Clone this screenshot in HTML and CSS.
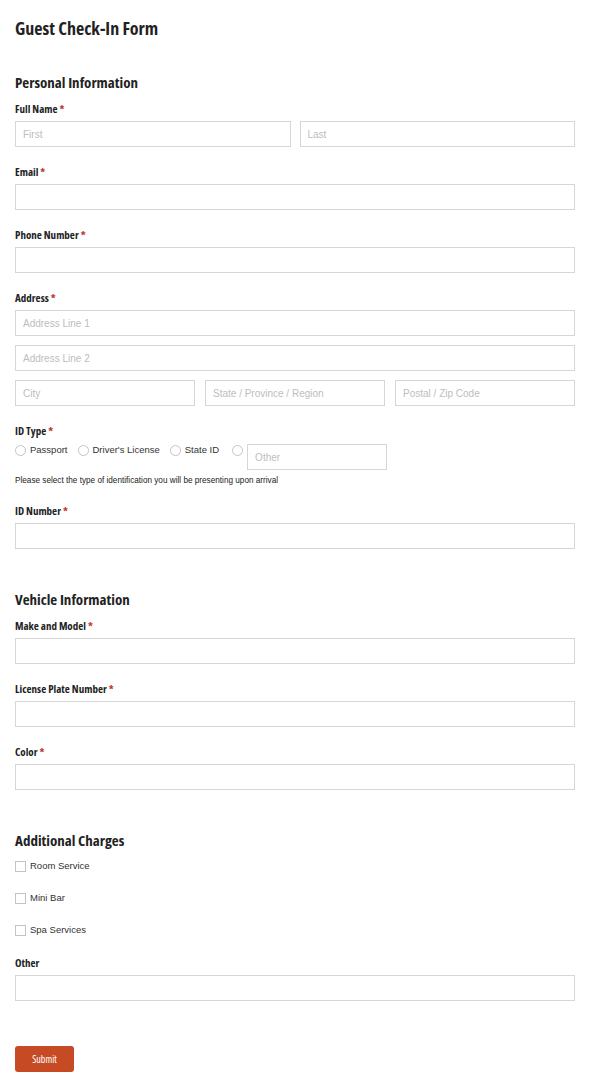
FILE: index.html
```html
<!DOCTYPE html>
<html lang="en">
<head>
    <meta charset="UTF-8">
    <meta name="viewport" content="width=device-width, initial-scale=1.0">
    <title>Guest Check-In Form</title>
    <link rel="stylesheet" href="styles.css">
</head>
<body>

    <form class="form" onsubmit="return false">
        <h1 class="form-title">Guest Check-In Form</h1>

        <section class="section">
            <h2>Personal Information</h2>

            <div class="field">
                <label>Full Name <span class="req">*</span></label>
                <div class="row row-2">
                    <input type="text" placeholder="First">
                    <input type="text" placeholder="Last">
                </div>
            </div>

            <div class="field">
                <label for="email">Email <span class="req">*</span></label>
                <input type="email" id="email">
            </div>

            <div class="field">
                <label for="phone">Phone Number <span class="req">*</span></label>
                <input type="tel" id="phone">
            </div>

            <div class="field">
                <label>Address <span class="req">*</span></label>
                <div class="stack">
                    <input type="text" placeholder="Address Line 1">
                    <input type="text" placeholder="Address Line 2">
                    <div class="row row-3">
                        <input type="text" placeholder="City">
                        <input type="text" placeholder="State / Province / Region">
                        <input type="text" placeholder="Postal / Zip Code">
                    </div>
                </div>
            </div>

            <div class="field">
                <label>ID Type <span class="req">*</span></label>
                <div class="choices">
                    <label class="choice"><input type="radio" name="idtype"> Passport</label>
                    <label class="choice"><input type="radio" name="idtype"> Driver's License</label>
                    <label class="choice"><input type="radio" name="idtype"> State ID</label>
                    <label class="choice choice-other"><input type="radio" name="idtype"> <input type="text" class="other" placeholder="Other"></label>
                </div>
                <p class="help">Please select the type of identification you will be presenting upon arrival</p>
            </div>

            <div class="field">
                <label for="idnum">ID Number <span class="req">*</span></label>
                <input type="text" id="idnum">
            </div>
        </section>

        <section class="section">
            <h2>Vehicle Information</h2>

            <div class="field">
                <label for="make">Make and Model <span class="req">*</span></label>
                <input type="text" id="make">
            </div>

            <div class="field">
                <label for="plate">License Plate Number <span class="req">*</span></label>
                <input type="text" id="plate">
            </div>

            <div class="field">
                <label for="color">Color <span class="req">*</span></label>
                <input type="text" id="color">
            </div>
        </section>

        <section class="section">
            <h2>Additional Charges</h2>

            <div class="checks">
                <label class="choice"><input type="checkbox"> Room Service</label>
                <label class="choice"><input type="checkbox"> Mini Bar</label>
                <label class="choice"><input type="checkbox"> Spa Services</label>
            </div>

            <div class="field">
                <label for="other">Other</label>
                <input type="text" id="other">
            </div>
        </section>

        <button type="submit" class="submit">Submit</button>
    </form>

</body>
</html>
```

FILE: styles.css
```css
body {
    margin: 0;
    padding: 16px 15px 20px;
    background-color: #fff;
    color: #222;
    font-family: "Liberation Sans", Arial, sans-serif;
}

h1, h2, label {
    font-family: "Open Sans", "Liberation Sans", sans-serif;
    font-stretch: 75%;
    font-weight: 700;
}

.form {
    display: flex;
    flex-direction: column;
}

.form-title {
    margin: 0;
    font-size: 18px;
    line-height: 24px;
}

.section {
    margin-top: 32px;
}

.section + .section {
    margin-top: 22px;
}

h2 {
    margin: 0 0 10px;
    font-size: 15px;
    line-height: 20px;
}

.field {
    display: flex;
    flex-direction: column;
    margin-bottom: 18px;
}

.field > label {
    font-size: 11px;
    line-height: 14px;
    margin-bottom: 5px;
}

.req {
    color: #c0392b;
}

input[type="text"], input[type="email"], input[type="tel"] {
    box-sizing: border-box;
    width: 100%;
    height: 26px;
    padding: 0 7px;
    border: 1px solid #d6d6d6;
    border-radius: 0;
    font-family: "Liberation Sans", Arial, sans-serif;
    font-size: 10px;
    color: #333;
    outline: none;
}

input::placeholder {
    color: #bdbdbd;
}

.stack {
    display: flex;
    flex-direction: column;
    gap: 9px;
}

.row {
    display: grid;
    gap: 9px;
}

.row-2 {
    grid-template-columns: 1fr 1fr;
}

.row-3 {
    grid-template-columns: 1fr 1fr 1fr;
    gap: 10px;
}

/* radio + checkbox rows */
.choices {
    display: flex;
    align-items: flex-start;
    margin-top: 1px;
}

.choice {
    display: flex;
    align-items: center;
    gap: 4px;
    margin-right: 10px;
    font-family: "Liberation Sans", Arial, sans-serif;
    font-stretch: normal;
    font-weight: 400;
    font-size: 9.5px;
    line-height: 12px;
    color: #333;
}

.choices .choice {
    height: 12px;
}

.choices .choice:nth-child(3) {
    margin-right: 13px;
}

.choice-other {
    align-items: flex-start;
    height: auto !important;
}

.choice-other .other {
    width: 140px;
    height: 26px;
}

.choice input[type="radio"],
.choice input[type="checkbox"] {
    appearance: none;
    -webkit-appearance: none;
    box-sizing: border-box;
    width: 11px;
    height: 11px;
    margin: 0;
    border: 1px solid #c4c4c4;
    background: #fff;
    flex: none;
}

.choice-other input[type="radio"] {
    margin-top: 1px;
}

.choice input[type="radio"] {
    border-radius: 50%;
}

.help {
    margin: 5px 0 0;
    font-size: 8.2px;
    line-height: 11px;
    color: #222;
}

.checks {
    display: flex;
    flex-direction: column;
    gap: 20px;
    margin-bottom: 20px;
}

.submit {
    align-self: flex-start;
    margin-top: 27px;
    width: 59px;
    height: 26px;
    padding: 0;
    border: none;
    border-radius: 3px;
    background-color: #c64b25;
    color: #fff;
    font-family: "Open Sans", "Liberation Sans", sans-serif;
    font-stretch: 75%;
    font-size: 10px;
    cursor: pointer;
}
```
